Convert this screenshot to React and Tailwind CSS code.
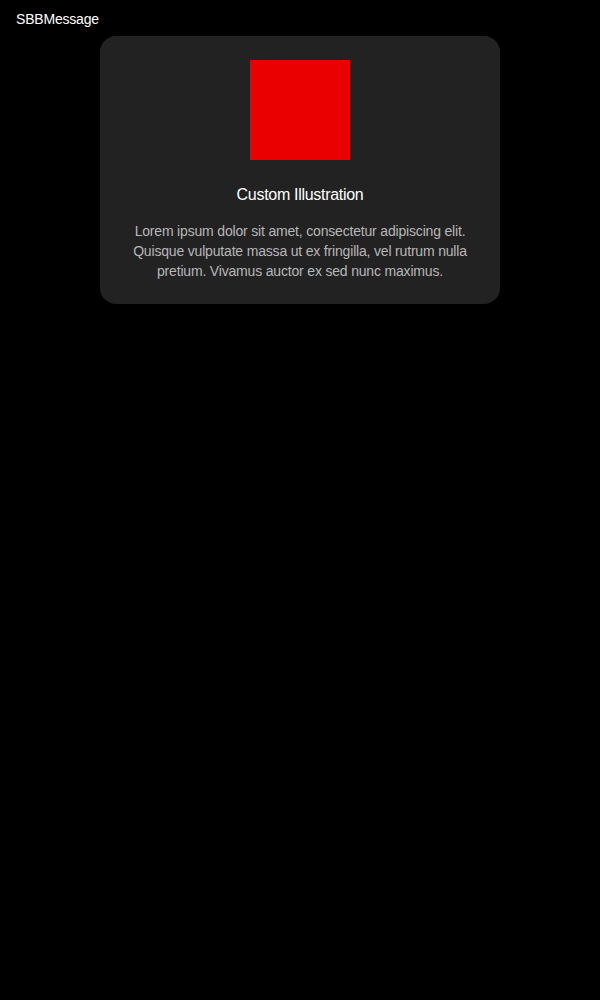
export default function App() {
  return (
    <div className="min-h-screen bg-black text-white font-['Liberation_Sans',Arial,sans-serif]">
      <div className="px-4 pt-[9px] text-sm leading-5 tracking-[-0.2px]">SBBMessage</div>
      <div className="mt-[7px] flex justify-center">
        <div className="w-[400px] rounded-2xl bg-[#222222] px-6 pt-6 pb-[23px] flex flex-col items-center text-center">
          <div className="w-[100px] h-[100px] bg-[#eb0000]" />
          <h2 className="mt-[23px] text-base leading-6 tracking-[-0.3px]">Custom Illustration</h2>
          <p className="mt-[14px] text-sm leading-5 tracking-[-0.18px] text-[#b7b7b7]">
            Lorem ipsum dolor sit amet, consectetur adipiscing elit. Quisque vulputate massa ut ex fringilla, vel rutrum nulla pretium. Vivamus auctor ex sed nunc maximus.
          </p>
        </div>
      </div>
    </div>
  )
}
